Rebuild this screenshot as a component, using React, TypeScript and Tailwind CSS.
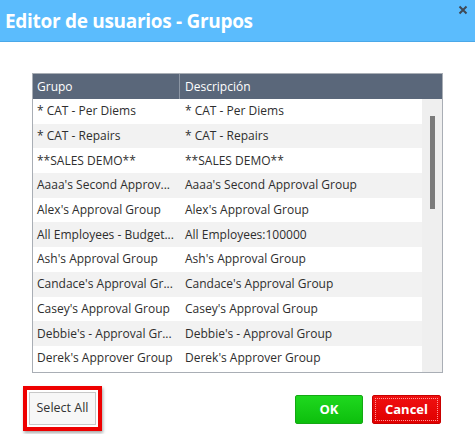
import React from 'react';

interface Row {
  group: string;
  desc: string;
}

const rows: Row[] = [
  { group: '* CAT - Per Diems', desc: '* CAT - Per Diems' },
  { group: '* CAT - Repairs', desc: '* CAT - Repairs' },
  { group: '**SALES DEMO**', desc: '**SALES DEMO**' },
  { group: "Aaaa's Second Approv...", desc: "Aaaa's Second Approval Group" },
  { group: "Alex's Approval Group", desc: "Alex's Approval Group" },
  { group: 'All Employees - Budget...', desc: 'All Employees:100000' },
  { group: "Ash's Approval Group", desc: "Ash's Approval Group" },
  { group: "Candace's Approval Gr...", desc: "Candace's Approval Group" },
  { group: "Casey's Approval Group", desc: "Casey's Approval Group" },
  { group: "Debbie's - Approval Gr...", desc: "Debbie's - Approval Group" },
  { group: "Derek's Approver Group", desc: "Derek's Approver Group" },
];

export default function App() {
  return (
    <div
      className="flex h-[434px] w-[475px] flex-col bg-white"
      style={{ fontFamily: '"Open Sans", "Noto Sans", sans-serif' }}
    >
      {/* title bar */}
      <div className="flex h-[42px] shrink-0 justify-between border-b border-[#4aa8e8] bg-[#5bbcfd] pl-[5px] pr-[7px]">
        <h1 className="mt-[8px] text-[19px] leading-[26px] font-bold tracking-[-0.3px] text-white">
          Editor de usuarios - Grupos
        </h1>
        <svg className="mt-[5px] shrink-0" width="10" height="10" viewBox="0 0 10 10">
          <path d="M1.5 1.5L8.5 8.5M8.5 1.5L1.5 8.5" stroke="#3f4955" strokeWidth="2" />
        </svg>
      </div>

      {/* table */}
      <div className="mx-[32px] mt-[31px] flex h-[300px] flex-col border border-[#a9aeb5] bg-white">
        <div className="flex h-[25px] shrink-0 bg-[#5a677a] text-[12px] text-white">
          <div className="flex w-[147px] items-center border-r border-[#8c96a4] pl-[4px]">Grupo</div>
          <div className="flex flex-1 items-center pl-[5px]">Descripción</div>
        </div>
        <div className="flex min-h-0 flex-1">
          <div className="flex-1 overflow-hidden">
            {rows.map((r, i) => (
              <div
                key={r.group}
                className={`flex h-[24.7px] items-center text-[12px] text-[#2e2e2e] ${i % 2 === 1 ? 'bg-[#f2f2f2]' : 'bg-white'}`}
              >
                <div className="w-[147px] whitespace-nowrap pl-[4px]">{r.group}</div>
                <div className="flex-1 whitespace-nowrap pl-[5px]">{r.desc}</div>
              </div>
            ))}
          </div>
          <div className="flex w-[20px] justify-center bg-[#efefef] pt-[17px]">
            <div className="h-[93px] w-[5px] bg-[#7b7b7b]" />
          </div>
        </div>
      </div>

      {/* footer */}
      <div className="mt-[13px] flex items-start justify-between pl-[23px] pr-[34px]">
        <div className="border-[4px] border-[#ee0000] p-[2px] shadow-[1px_2px_3px_rgba(0,0,0,0.35)]">
          <button className="h-[33px] w-[67px] border border-[#c8c8c8] bg-[#f7f7f7] text-[12.5px] text-[#333]">
            Select All
          </button>
        </div>
        <div className="mt-[9px] flex gap-[9px]">
          <button className="h-[29px] w-[68px] rounded-[2px] border border-[#14a814] bg-gradient-to-b from-[#1ed81e] to-[#0cbf0c] text-[13px] font-bold text-white">
            OK
          </button>
          <button className="h-[29px] w-[69px] rounded-[2px] border border-[#c80000] bg-gradient-to-b from-[#f01010] to-[#e00000] p-[2px] text-[13px] font-bold text-white">
            <span className="flex h-full w-full items-center justify-center border border-dotted border-[#ff9a9a]">
              Cancel
            </span>
          </button>
        </div>
      </div>
    </div>
  );
}
